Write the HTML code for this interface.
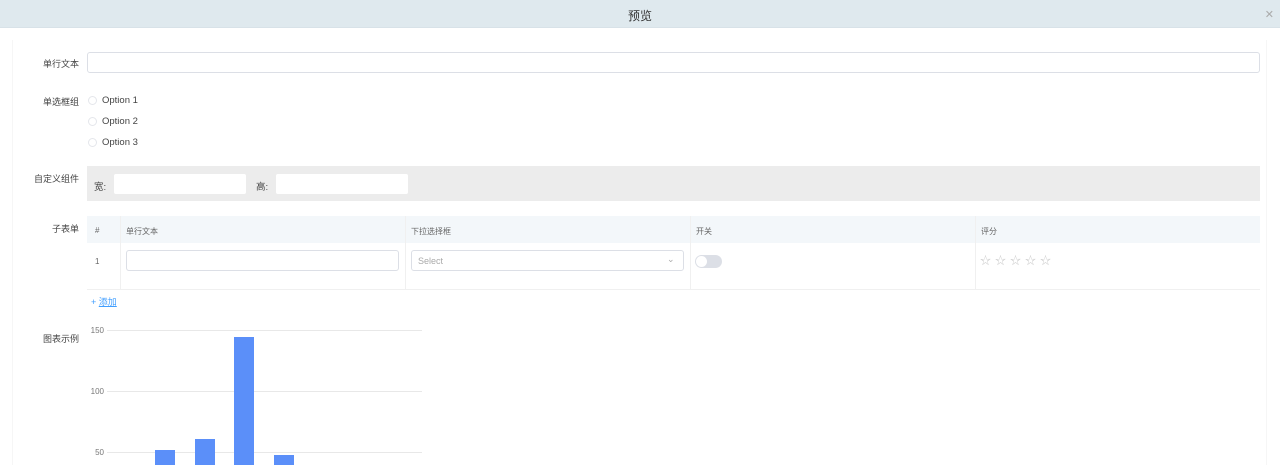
<!DOCTYPE html><html><head><meta charset="utf-8"><style>
*{box-sizing:border-box;margin:0;padding:0}
body{width:1280px;height:465px;overflow:hidden;background:#fff;font-family:"Liberation Sans","Noto Sans CJK SC",sans-serif;color:#333;position:relative}
.hd{position:absolute;left:0;top:0;width:1280px;height:28px;background:#dfe9ee;border-bottom:1px solid #d8e2e8}
.hd .t{position:absolute;left:0;right:0;top:7px;text-align:center;font-size:12px;color:#333}
.hd .x{position:absolute;right:6px;top:8px;font-size:11px;color:#aaa}
.a{position:absolute}
.lbl{font-size:9px;color:#444;text-align:right;width:70px;left:9px}
.inp{border:1px solid #dcdfe6;border-radius:3px;background:#fff}
.rad{width:9px;height:9px;border:1px solid #e4e6eb;border-radius:50%}
.opt{font-size:9.5px;color:#444}
.th{font-size:8px;color:#666}
.g{height:1px;background:#e8e8e8;left:107px;width:315px}
.yl{font-size:8px;color:#777;left:86px;width:18px;text-align:right}
.bar{background:#5b8ff9;width:20px;bottom:0}
</style></head><body>
<div class="hd"><div class="t">预览</div><div class="x">✕</div></div>
<div class="a" style="left:12px;top:40px;width:1px;height:425px;background:#f6f6f6"></div>
<div class="a" style="left:1266px;top:40px;width:1px;height:425px;background:#f6f6f6"></div>

<div class="a lbl" style="top:57px">单行文本</div>
<div class="a inp" style="left:87px;top:52px;width:1173px;height:21px"></div>

<div class="a lbl" style="top:95px">单选框组</div>
<div class="a rad" style="left:88px;top:96px"></div><div class="a opt" style="left:102px;top:95px">Option 1</div>
<div class="a rad" style="left:88px;top:117px"></div><div class="a opt" style="left:102px;top:116px">Option 2</div>
<div class="a rad" style="left:88px;top:138px"></div><div class="a opt" style="left:102px;top:137px">Option 3</div>

<div class="a lbl" style="top:172px">自定义组件</div>
<div class="a" style="left:87px;top:166px;width:1173px;height:35px;background:#ececec"></div>
<div class="a opt" style="left:94px;top:179px">宽:</div>
<div class="a" style="left:114px;top:174px;width:132px;height:20px;background:#fff;border-radius:2px"></div>
<div class="a opt" style="left:256px;top:179px">高:</div>
<div class="a" style="left:276px;top:174px;width:132px;height:20px;background:#fff;border-radius:2px"></div>

<div class="a lbl" style="top:222px">子表单</div>
<div class="a" style="left:87px;top:216px;width:1173px;height:27px;background:#f3f7fa"></div>
<div class="a" style="left:87px;top:289px;width:1173px;height:1px;background:#f0f0f0"></div>
<div class="a" style="left:120px;top:216px;width:1px;height:74px;background:#f0f0f0"></div>
<div class="a" style="left:405px;top:216px;width:1px;height:74px;background:#f0f0f0"></div>
<div class="a" style="left:690px;top:216px;width:1px;height:74px;background:#f0f0f0"></div>
<div class="a" style="left:975px;top:216px;width:1px;height:74px;background:#f0f0f0"></div>
<div class="a th" style="left:95px;top:226px">#</div>
<div class="a th" style="left:126px;top:226px">单行文本</div>
<div class="a th" style="left:411px;top:226px">下拉选择框</div>
<div class="a th" style="left:696px;top:226px">开关</div>
<div class="a th" style="left:981px;top:226px">评分</div>
<div class="a th" style="left:95px;top:257px">1</div>
<div class="a inp" style="left:126px;top:250px;width:273px;height:21px"></div>
<div class="a inp" style="left:411px;top:250px;width:273px;height:21px"></div>
<div class="a" style="left:418px;top:256px;font-size:9px;color:#aaa">Select</div>
<div class="a" style="left:667px;top:254px;font-size:9px;color:#aaa">⌄</div>
<div class="a" style="left:695px;top:255px;width:27px;height:13px;border-radius:7px;background:#dcdfe6"></div>
<div class="a" style="left:696px;top:256px;width:11px;height:11px;border-radius:50%;background:#fff"></div>
<div class="a" style="left:980px;top:252px;font-size:11px;color:#ccc;letter-spacing:4px">☆☆☆☆☆</div>

<div class="a" style="left:91px;top:295px;font-size:9px;color:#409eff">+ <u>添加</u></div>

<div class="a lbl" style="top:332px">图表示例</div>
<div class="a g" style="top:330px"></div><div class="a yl" style="top:326px">150</div>
<div class="a g" style="top:391px"></div><div class="a yl" style="top:387px">100</div>
<div class="a g" style="top:452px"></div><div class="a yl" style="top:448px">50</div>
<div class="a bar" style="left:155px;top:450px"></div>
<div class="a bar" style="left:195px;top:439px"></div>
<div class="a bar" style="left:234px;top:337px"></div>
<div class="a bar" style="left:274px;top:455px"></div>
</body></html>
